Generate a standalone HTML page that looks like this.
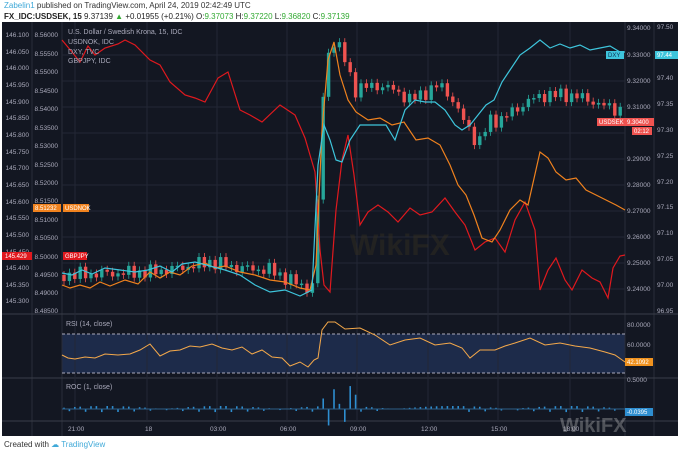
<!DOCTYPE html>
<html><head><meta charset="utf-8"><style>
body{margin:0;width:680px;height:454px;background:#fff;font-family:"Liberation Sans",sans-serif;overflow:hidden;position:relative}
.t{position:absolute;font-size:8px;white-space:nowrap}
</style></head><body>
<div class="t" style="left:4px;top:1px;color:#333"><span style="color:#3fa9d8">Zabelin1</span> published on TradingView.com, April 24, 2019 02:42:49 UTC</div>
<div class="t" style="left:4px;top:12px;color:#222"><b>FX_IDC:USDSEK, 15</b> 9.37139 <span style="color:#3a3">▲</span> +0.01955 (+0.21%) O:<span style="color:#3a3">9.37073</span> H:<span style="color:#3a3">9.37220</span> L:<span style="color:#3a3">9.36820</span> C:<span style="color:#3a3">9.37139</span></div>
<svg width="680" height="454" style="position:absolute;left:0;top:0" font-family="Liberation Sans" font-size="6.5">
<rect x="2" y="22" width="676" height="414" fill="#131722"/>
<rect x="62" y="334" width="563" height="39" fill="#1d2b4a"/>
<g stroke="#2a2e39" stroke-width="1">
<line x1="32" y1="22" x2="32" y2="436"/><line x1="62" y1="22" x2="62" y2="436"/>
<line x1="625" y1="22" x2="625" y2="436"/><line x1="654" y1="22" x2="654" y2="436"/>
<line x1="2" y1="314" x2="678" y2="314" stroke="#3a3e49"/><line x1="2" y1="378" x2="678" y2="378" stroke="#3a3e49"/><line x1="2" y1="421" x2="678" y2="421" stroke="#3a3e49"/>
</g>
<g stroke="#232735">
<line x1="75" y1="22" x2="75" y2="421"/><line x1="147" y1="22" x2="147" y2="421"/><line x1="217" y1="22" x2="217" y2="421"/><line x1="287" y1="22" x2="287" y2="421"/><line x1="357" y1="22" x2="357" y2="421"/><line x1="428" y1="22" x2="428" y2="421"/><line x1="498" y1="22" x2="498" y2="421"/><line x1="570" y1="22" x2="570" y2="421"/>
<line x1="62" y1="55" x2="625" y2="55"/><line x1="62" y1="81" x2="625" y2="81"/><line x1="62" y1="107" x2="625" y2="107"/><line x1="62" y1="133" x2="625" y2="133"/><line x1="62" y1="159" x2="625" y2="159"/><line x1="62" y1="185" x2="625" y2="185"/><line x1="62" y1="211" x2="625" y2="211"/><line x1="62" y1="237" x2="625" y2="237"/><line x1="62" y1="263" x2="625" y2="263"/><line x1="62" y1="289" x2="625" y2="289"/>
</g>
<g stroke="#aab" stroke-dasharray="3,2"><line x1="62" y1="334" x2="625" y2="334"/><line x1="62" y1="373" x2="625" y2="373"/></g>
<text x="350" y="255" font-size="30" font-weight="bold" fill="#3a3320" opacity="0.4">WikiFX</text>
<g id="c"></g>
<polyline fill="none" stroke="#e0191e" stroke-width="1.2" points="62,40 72,52 80,62 88,46 95,55 105,48 118,44 125,40 135,45 150,60 160,65 170,82 185,95 195,98 205,102 218,78 228,72 240,110 250,115 262,122 280,105 295,115 305,138 315,172 320,250 324,285 330,292 336,210 342,160 348,135 354,175 360,225 368,212 378,205 388,212 398,222 410,208 420,215 432,212 445,198 455,212 465,225 475,250 485,242 495,238 505,252 515,220 525,202 535,230 540,290 548,270 556,258 565,280 572,290 582,270 592,278 600,282 608,298 613,268 620,256 625,255"/>
<polyline fill="none" stroke="#f0821e" stroke-width="1.2" points="62,285 70,288 80,285 90,288 100,282 110,286 125,280 138,284 150,272 160,278 170,272 180,275 192,266 205,263 215,268 225,266 240,272 255,275 270,280 285,282 300,288 310,290 316,265 322,130 328,60 334,42 340,75 348,100 356,112 368,120 380,118 392,125 404,122 416,140 428,138 440,145 450,165 458,185 466,195 474,215 482,238 492,242 500,230 510,210 520,200 528,205 540,152 548,158 556,172 566,180 576,178 586,190 596,195 606,200 616,205 625,210"/>
<polyline fill="none" stroke="#3ec5dc" stroke-width="1.2" points="62,273 72,275 82,270 92,274 105,268 120,270 135,272 148,270 160,266 172,272 182,264 195,262 210,266 225,270 240,275 255,285 270,292 285,290 300,296 312,290 318,165 324,125 330,140 336,160 342,162 350,140 360,125 368,125 378,125 386,125 395,140 405,110 415,100 425,102 435,102 445,110 455,125 462,130 470,125 478,115 486,105 494,100 502,82 510,70 520,55 530,48 540,40 550,48 560,44 570,48 580,45 590,50 600,48 610,46 620,52 625,52"/>
<polyline fill="none" stroke="#f5a94a" stroke-width="1" points="62,355 68,358 75,359 85,357 95,358 105,354 118,355 130,354 140,350 150,344 160,356 170,351 180,350 190,346 200,347 212,344 222,348 232,350 242,347 252,354 262,350 272,357 282,358 290,366 300,362 308,367 314,360 318,358 322,330 328,322 335,322 345,329 360,328 375,335 390,345 405,340 420,338 435,345 450,343 462,348 470,358 480,350 495,350 505,346 515,343 530,338 545,345 560,343 575,346 590,348 605,352 615,355 625,362"/>
<g id="r"></g>
<line x1="62" y1="409" x2="625" y2="409" stroke="#2d5f88"/>
<g fill="#aab" text-anchor="end">
<text x="29" y="37">146.100</text><text x="29" y="54">146.050</text><text x="29" y="70">146.000</text><text x="29" y="87">145.950</text><text x="29" y="104">145.900</text><text x="29" y="120">145.850</text><text x="29" y="137">145.800</text><text x="29" y="154">145.750</text><text x="29" y="170">145.700</text><text x="29" y="187">145.650</text><text x="29" y="204">145.600</text><text x="29" y="220">145.550</text><text x="29" y="237">145.500</text><text x="29" y="254">145.450</text><text x="29" y="270">145.400</text><text x="29" y="287">145.350</text><text x="29" y="303">145.300</text>
<text x="58" y="37">8.56000</text><text x="58" y="56">8.55500</text><text x="58" y="74">8.55000</text><text x="58" y="93">8.54500</text><text x="58" y="111">8.54000</text><text x="58" y="130">8.53500</text><text x="58" y="148">8.53000</text><text x="58" y="167">8.52500</text><text x="58" y="185">8.52000</text><text x="58" y="203">8.51500</text><text x="58" y="222">8.51000</text><text x="58" y="240">8.50500</text><text x="58" y="259">8.50000</text><text x="58" y="277">8.49500</text><text x="58" y="295">8.49000</text><text x="58" y="313">8.48500</text>
</g>
<g fill="#aab">
<text x="627" y="30">9.34000</text><text x="627" y="57">9.33000</text><text x="627" y="83">9.32000</text><text x="627" y="109">9.31000</text><text x="627" y="161">9.29000</text><text x="627" y="187">9.28000</text><text x="627" y="213">9.27000</text><text x="627" y="239">9.26000</text><text x="627" y="265">9.25000</text><text x="627" y="291">9.24000</text>
<text x="657" y="29">97.50</text><text x="657" y="80">97.40</text><text x="657" y="106">97.35</text><text x="657" y="132">97.30</text><text x="657" y="158">97.25</text><text x="657" y="184">97.20</text><text x="657" y="209">97.15</text><text x="657" y="235">97.10</text><text x="657" y="261">97.05</text><text x="657" y="287">97.00</text><text x="657" y="313">96.95</text>
<text x="627" y="327">80.0000</text><text x="627" y="347">60.0000</text><text x="627" y="382">0.5000</text>
<text x="68" y="431">21:00</text><text x="145" y="431">18</text><text x="210" y="431">03:00</text><text x="280" y="431">06:00</text><text x="350" y="431">09:00</text><text x="421" y="431">12:00</text><text x="491" y="431">15:00</text><text x="563" y="431">18:00</text>
<text x="68" y="34" font-size="7">U.S. Dollar / Swedish Krona, 15, IDC</text><text x="68" y="44" font-size="7">USDNOK, IDC</text><text x="68" y="54" font-size="7">DXY, TVC</text><text x="68" y="63" font-size="7">GBPJPY, IDC</text>
<text x="66" y="326" font-size="7">RSI (14, close)</text><text x="66" y="389" font-size="7">ROC (1, close)</text>
</g>
<rect x="33" y="204" width="28" height="8" fill="#f0821e"/><text x="35" y="210" fill="#fff" font-size="6">8.51232</text>
<rect x="63" y="204" width="26" height="8" fill="#f0821e"/><text x="65" y="210" fill="#fff" font-size="6">USDNOK</text>
<rect x="2" y="252" width="30" height="8" fill="#e0191e"/><text x="5" y="258" fill="#fff" font-size="6">145.429</text>
<rect x="63" y="252" width="24" height="8" fill="#e0191e"/><text x="65" y="258" fill="#fff" font-size="6">GBPJPY</text>
<rect x="606" y="51" width="18" height="8" fill="#3ec5dc"/><text x="608" y="57" fill="#135" font-size="6">DXY</text>
<rect x="655" y="51" width="23" height="8" fill="#3ec5dc"/><text x="657" y="57" fill="#fff" font-size="6">97.44</text>
<rect x="597" y="118" width="28" height="8" fill="#ef5350"/><text x="599" y="124" fill="#fff" font-size="6">USDSEK</text>
<rect x="625" y="118" width="29" height="8" fill="#ef5350"/><text x="627" y="124" fill="#fff" font-size="6">9.30400</text>
<rect x="632" y="127" width="20" height="8" fill="#ef5350"/><text x="634" y="133" fill="#fff" font-size="6">02:12</text>
<rect x="625" y="358" width="28" height="8" fill="#f0921e"/><text x="627" y="364" fill="#fff" font-size="6">42.1092</text>
<rect x="625" y="408" width="28" height="8" fill="#2e8ed0"/><text x="627" y="414" fill="#fff" font-size="6">-0.0395</text>
<text x="560" y="432" font-size="20" font-weight="bold" fill="#ddd" opacity="0.3">WikiFX</text>
</svg>
<div class="t" style="left:4px;top:440px;color:#333">Created with <span style="color:#3fa9d8">☁ TradingView</span></div>
<script>
var k=[[64,275],[150,272],[180,268],[210,262],[240,268],[270,270],[300,285],[312,290],[318,200],[325,60],[335,40],[345,60],[355,90],[375,85],[395,90],[410,100],[420,95],[440,85],[450,95],[460,115],[470,130],[478,145],[490,120],[500,120],[515,110],[530,100],[545,95],[570,95],[590,100],[600,105],[620,110]];
function f(x){for(var i=1;i<k.length;i++){if(x<=k[i][0]){var a=k[i-1],b=k[i];return a[1]+(b[1]-a[1])*(x-a[0])/(b[0]-a[0]);}}return 110;}
var s='',p=f(64),r='';
for(var x=64;x<621;x+=5.4){var c=f(x)+Math.sin(x*1.7)*5+Math.cos(x*.9)*3;var o=p;var up=c<o;var col=up?'#26a69a':'#ef5350';var t=Math.min(o,c),h=Math.max(Math.abs(c-o),1.5);
s+='<line x1="'+x+'" x2="'+x+'" y1="'+(t-4)+'" y2="'+(t+h+4)+'" stroke="'+col+'" stroke-width="0.8"/><rect x="'+(x-1.7)+'" y="'+t+'" width="3.4" height="'+h+'" fill="'+col+'"/>';
p=c;var v=(x>318&&x<360)?Math.abs(Math.sin(x))*20+3:Math.abs(Math.sin(x*2.3))*3;var dn=Math.sin(x*3.1)>0.6;
r+='<rect x="'+(x-0.8)+'" y="'+(dn?409:409-v)+'" width="1.6" height="'+(dn?v*0.7+1:v)+'" fill="#2e8ed0"/>';}
document.getElementById('c').innerHTML=s;document.getElementById('r').innerHTML=r;
</script>
</body></html>
